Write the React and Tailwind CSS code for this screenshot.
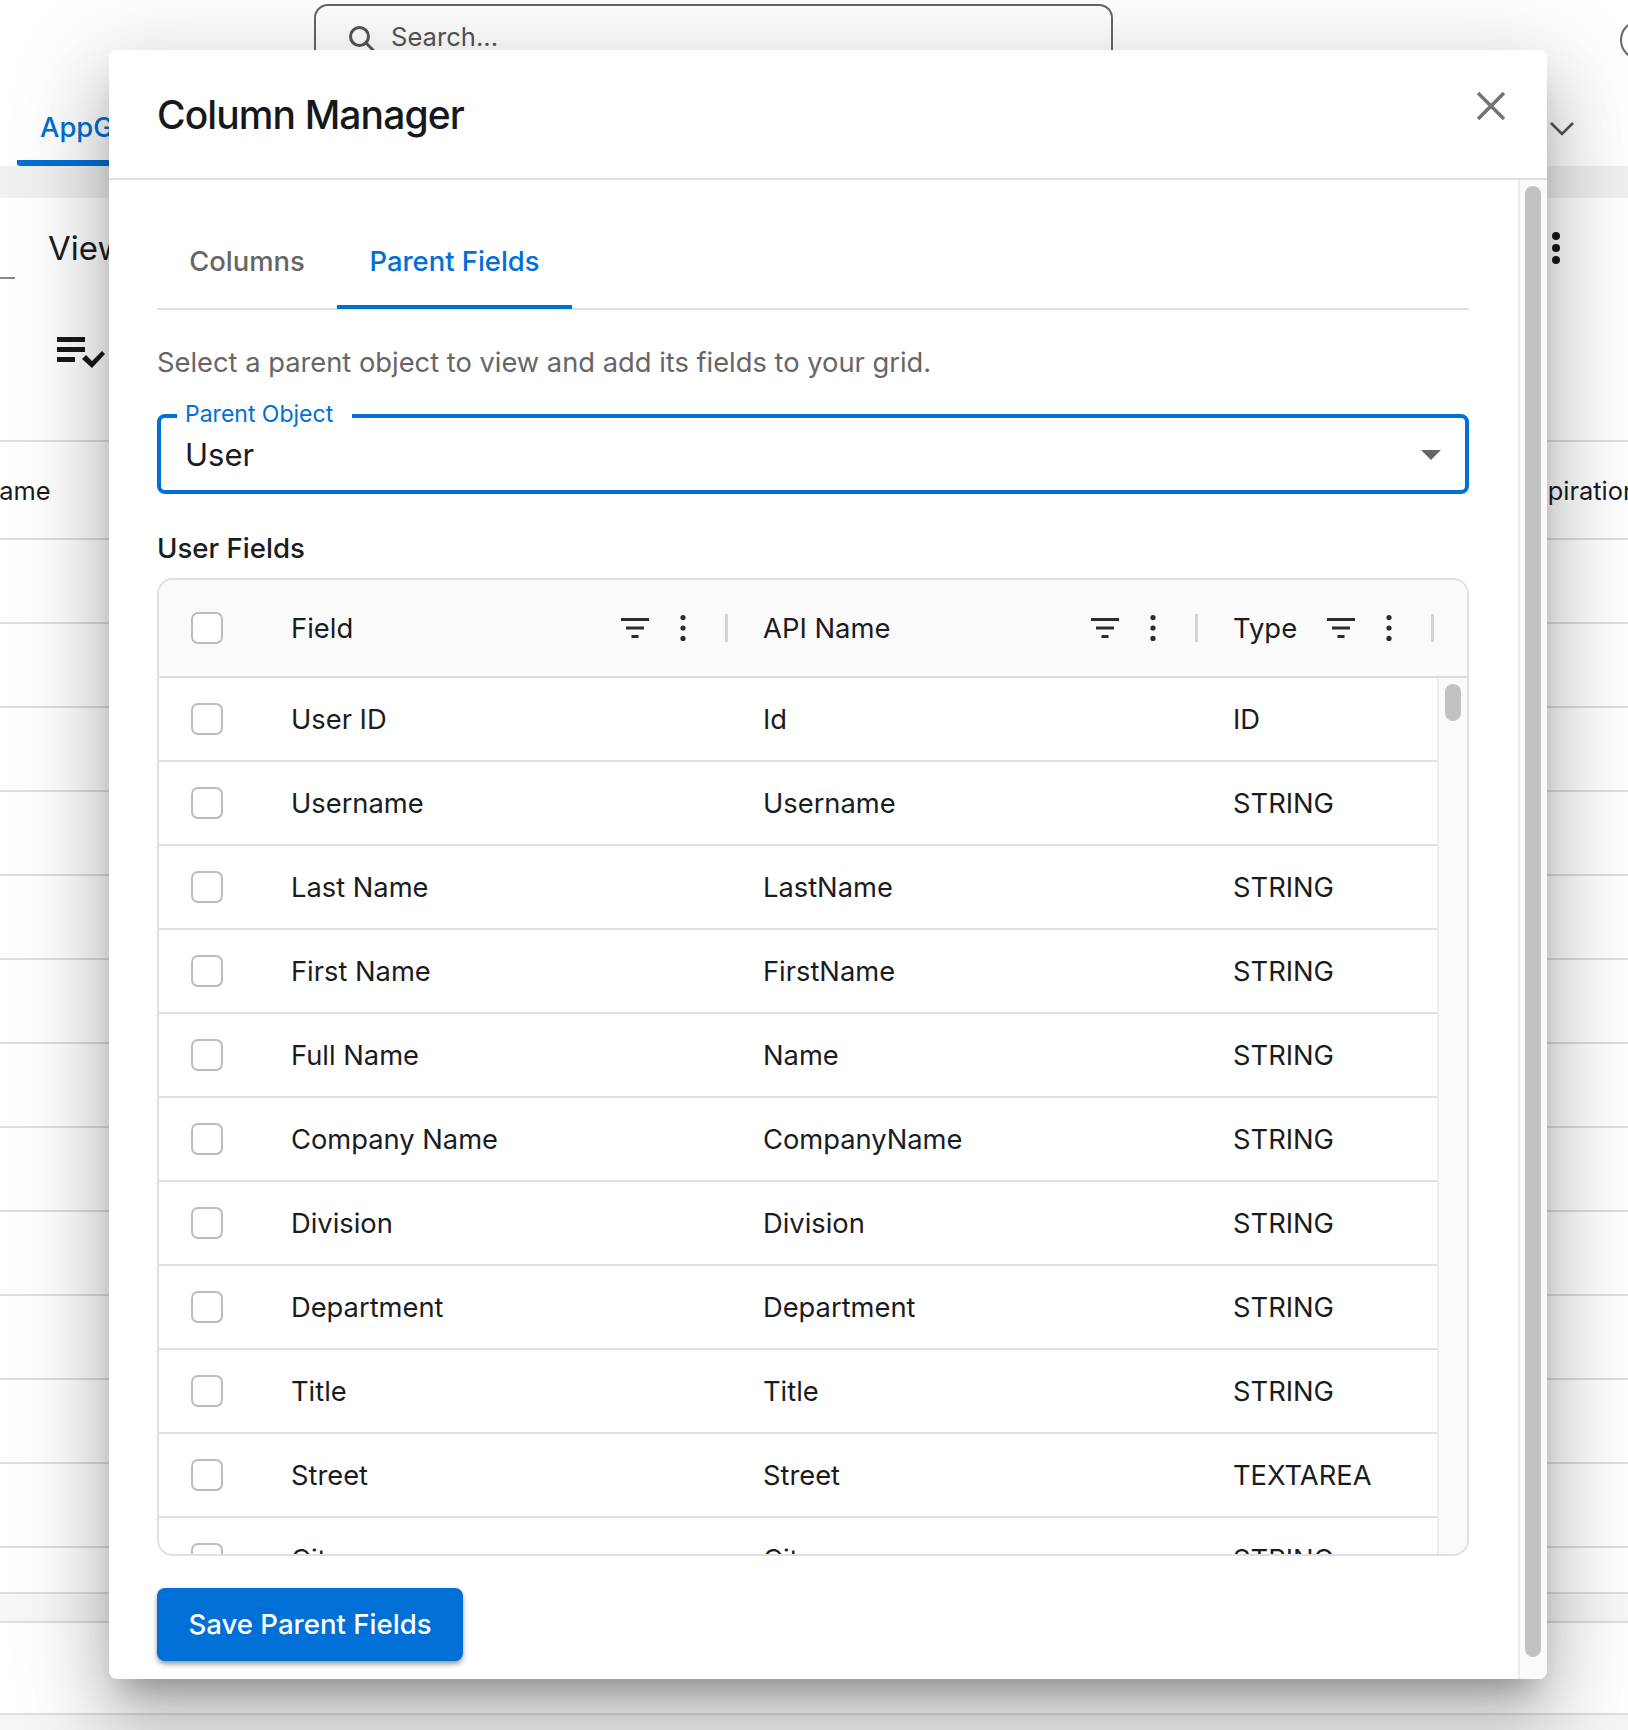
import React from "react";

const rows = [
  ["User ID", "Id", "ID"],
  ["Username", "Username", "STRING"],
  ["Last Name", "LastName", "STRING"],
  ["First Name", "FirstName", "STRING"],
  ["Full Name", "Name", "STRING"],
  ["Company Name", "CompanyName", "STRING"],
  ["Division", "Division", "STRING"],
  ["Department", "Department", "STRING"],
  ["Title", "Title", "STRING"],
  ["Street", "Street", "TEXTAREA"],
  ["City", "City", "STRING"],
];

function FilterIcon() {
  return (
    <svg width="28" height="20" viewBox="0 0 28 20" className="shrink-0 block">
      <rect x="0" y="0" width="28" height="3" fill="#2a2d30" />
      <rect x="5" y="8.5" width="18" height="3" fill="#2a2d30" />
      <rect x="10.5" y="17" width="7" height="3" fill="#2a2d30" />
    </svg>
  );
}

function DotsIcon({ color = "#2a2d30", r = 2.6, h = 26, w = 8 }) {
  return (
    <svg width={w} height={h} viewBox={`0 0 ${w} ${h}`} className="shrink-0 block">
      <circle cx={w / 2} cy={r} r={r} fill={color} />
      <circle cx={w / 2} cy={h / 2} r={r} fill={color} />
      <circle cx={w / 2} cy={h - r} r={r} fill={color} />
    </svg>
  );
}

function Box() {
  return <div className="w-[32px] h-[32px] shrink-0 rounded-[7px] border-2 border-[#bdbdbd] bg-white" />;
}

function HeadCell({ label, width }) {
  return (
    <div className={`${width} flex items-center shrink-0`}>
      <span className="flex-1 pt-[2px] text-[27.4px]">{label}</span>
      <FilterIcon />
      <span className="w-[30px]" />
      <DotsIcon />
      <span className="w-[38px]" />
      <span className="w-[3px] h-[28px] bg-[#d4d4d4]" />
    </div>
  );
}

function BgRow({ children, tall }) {
  return (
    <div className={`${tall ? "h-[98px]" : "h-[84px]"} border-b-2 border-[#dedede] box-border flex items-center justify-between overflow-hidden`}>
      {children}
    </div>
  );
}

export default function App() {
  return (
    <div
      className="relative w-[1628px] h-[1730px] overflow-hidden bg-white text-[#1a1c1f]"
      style={{ fontFamily: "Inter, 'Liberation Sans', sans-serif" }}
    >
      {/* page behind the dialog */}
      <div className="flex flex-col h-full">
        <div className="h-[98px] flex items-start pl-[314px] pt-[4px] relative">
          <div className="w-[799px] shrink-0 h-[90px] rounded-t-[14px] border-2 border-[#666] flex items-start pl-[32px] pt-[14px] text-[#555] text-[25.6px] leading-[34px]">
            <svg width="28" height="28" viewBox="0 0 28 28" className="mt-[5px] mr-[15px]" fill="none" stroke="#555" strokeWidth="3">
              <circle cx="11.5" cy="11.5" r="9" />
              <path d="M18 18l9 9" />
            </svg>
            Search...
          </div>
          <div className="ml-[507px] mt-[16px] w-[40px] h-[40px] shrink-0 rounded-full border-2 border-[#666]" />
        </div>
        <div className="h-[68px] relative flex items-start justify-between">
          <div className="ml-[17px] w-[200px] h-[68px] border-b-[6px] border-[#006fd6] rounded-b-[3px] pl-[23px] pt-[12px] text-[#006fd6] text-[27.4px] leading-[34px] font-medium">
            AppGrid
          </div>
          <svg width="24" height="16" viewBox="0 0 24 16" className="mt-[23px] mr-[54px]" fill="none" stroke="#555" strokeWidth="2.6">
            <path d="M1 2l11 11L23 2" />
          </svg>
        </div>
        <div className="h-[32px] bg-[#f0f0f0] shrink-0" />
        <div className="h-[85px] flex items-start justify-between">
          <div className="flex items-start">
            <div className="w-[15px] h-[81px] border-b-2 border-[#888]" />
            <span className="ml-[33px] mt-[30px] text-[33px] leading-[40px]">View</span>
          </div>
          <div className="mr-[68px] mt-[34px]">
            <DotsIcon color="#16181b" r={4} h={32} w={8} />
          </div>
        </div>
        <div className="h-[159px] shrink-0 border-b-2 border-[#dedede] box-border flex flex-col">
          <svg width="48" height="32" viewBox="0 0 48 32" className="ml-[57px] mt-[54px]" fill="#16181b">
            <rect x="0" y="0" width="28" height="5" />
            <rect x="0" y="10" width="28" height="5" />
            <rect x="0" y="20" width="18" height="5" />
            <path d="M25 22l4-4 6 6 10-10 3 3-13 14z" />
          </svg>
        </div>
        <BgRow tall>
          <span className="-ml-[20px] pt-[3px] text-[25.4px]">Name</span>
          <span className="-mr-[10px] pt-[3px] text-[25.4px]">Expiration</span>
        </BgRow>
        {Array.from({ length: 12 }).map((_, i) => (
          <BgRow key={i} />
        ))}
        <div className="h-[46px] border-b-2 border-[#dedede] box-border shrink-0" />
        <div className="h-[29px] border-b-2 border-[#dedede] bg-[#f7f7f7] box-border shrink-0" />
        <div className="h-[92px] border-b-2 border-[#dedede] box-border shrink-0" />
        <div className="flex-1 bg-[#f5f5f5]" />
      </div>

      {/* dialog */}
      <div className="absolute left-[109px] top-[50px] w-[1438px] h-[1629px] bg-white rounded-[8px] overflow-hidden flex flex-col shadow-[0_22px_30px_-14px_rgba(0,0,0,0.28),0_48px_76px_6px_rgba(0,0,0,0.16),0_18px_92px_16px_rgba(0,0,0,0.13)]">
        <div className="h-[130px] shrink-0 border-b-2 border-[#e0e0e0] box-border flex items-start justify-between">
          <h2 className="ml-[48px] mt-[40px] text-[39px] leading-[50px] font-medium tracking-[-0.9px] text-[#16181b]">Column Manager</h2>
          <svg width="28" height="28" viewBox="0 0 28 28" className="mt-[42px] mr-[42px]" stroke="#757575" strokeWidth="3.6" fill="none">
            <path d="M1 1l26 26M27 1L1 27" />
          </svg>
        </div>
        <div className="flex-1 flex min-h-0">
          <div className="flex-1 min-w-0 pl-[48px] pr-[49px]">
            <div className="mt-[32px] h-[96px] border-b-2 border-[#e0e0e0] box-content flex text-[27.4px] font-medium">
              <div className="w-[180px] h-[96px] pt-[4px] flex items-center justify-center text-[#666]">Columns</div>
              <div className="w-[235px] h-[97px] pt-[2px] flex items-center justify-center text-[#006fd6] border-y-[4px] border-t-transparent border-b-[#006fd6]">Parent Fields</div>
            </div>
            <p className="mt-[35px] text-[27.3px] leading-[36px] text-[#666]">Select a parent object to view and add its fields to your grid.</p>
            <div className="relative mt-[33px] h-[80px] rounded-[8px] border-[4px] border-[#006fd6] flex items-center justify-between pl-[24px] pr-[24px] pt-[2px]">
              <span className="text-[31px]">User</span>
              <span className="w-0 h-0 border-x-[10px] border-x-transparent border-t-[10px] border-t-[#666]" />
              <span className="absolute left-[16px] -top-[19px] bg-white pl-[8px] pr-[19px] text-[23px] leading-[30px] text-[#006fd6]">Parent Object</span>
            </div>
            <h3 className="mt-[36px] text-[27.6px] leading-[36px] font-medium">User Fields</h3>
            <div className="mt-[12px] h-[978px] rounded-[16px] border-2 border-[#e0e0e0] overflow-hidden flex flex-col text-[27.3px]">
              <div className="h-[98px] shrink-0 bg-[#fafafa] border-b-2 border-[#dcdcdc] box-border flex items-center pl-[32px]">
                <div className="w-[100px] shrink-0"><Box /></div>
                <HeadCell label="Field" width="w-[437px]" />
                <span className="w-[35px] shrink-0" />
                <HeadCell label="API Name" width="w-[435px]" />
                <span className="w-[35px] shrink-0" />
                <HeadCell label="Type" width="w-[201px]" />
              </div>
              <div className="flex-1 min-h-0 flex">
                <div className="flex-1 min-w-0">
                  {rows.map((r) => (
                    <div key={r[0]} className="h-[84px] border-b-2 border-[#e0e0e0] box-border flex items-center pl-[32px]">
                      <div className="w-[100px] shrink-0"><Box /></div>
                      <div className="w-[472px] shrink-0 pt-[2px]">{r[0]}</div>
                      <div className="w-[470px] shrink-0 pt-[2px]">{r[1]}</div>
                      <div className="pt-[2px]">{r[2]}</div>
                    </div>
                  ))}
                </div>
                <div className="w-[30px] shrink-0 bg-[#fafafa] border-l-2 border-[#ececec] pl-[6px] pt-[6px]">
                  <div className="w-[16px] h-[37px] rounded-full bg-[#c1c1c1]" />
                </div>
              </div>
            </div>
            <button className="mt-[32px] w-[306px] h-[73px] rounded-[8px] bg-[#006fd6] text-white text-[27.6px] font-medium shadow-[0_4px_6px_-1px_rgba(0,0,0,0.3),0_2px_4px_rgba(0,0,0,0.2)]">
              Save Parent Fields
            </button>
          </div>
          <div className="w-[29px] shrink-0 bg-[#fafafa] border-l-2 border-[#ececec] pl-[5px] pt-[6px]">
            <div className="w-[16px] h-[1471px] rounded-full bg-[#c1c1c1]" />
          </div>
        </div>
      </div>
    </div>
  );
}
